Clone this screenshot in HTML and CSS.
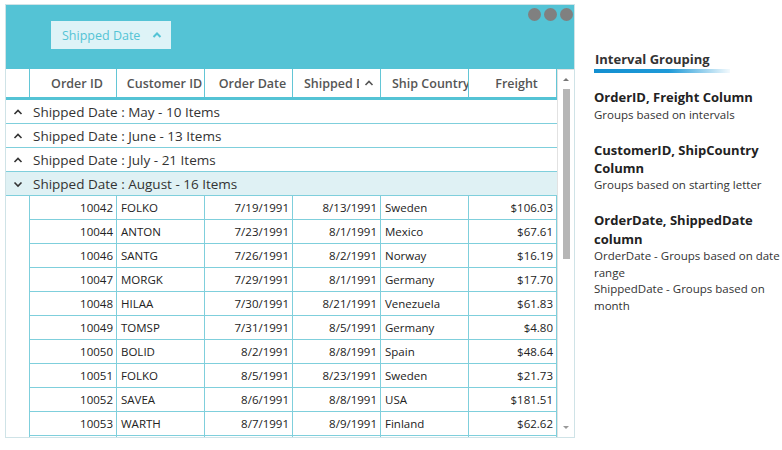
FILE: index.html
```html
<!DOCTYPE html>
<html>
<head>
<meta charset="utf-8">
<link rel="stylesheet" href="styles.css">
</head>
<body>
<div class="page">
  <div class="grid">
    <div class="groupbar">
      <div class="chip"><span>Shipped Date</span>
        <svg class="chip-ico" width="10" height="8" viewBox="0 0 10 8"><polyline points="1.5,6 5,2.5 8.5,6" fill="none" stroke="#54c3d5" stroke-width="2"/></svg>
      </div>
      <div class="dots"><span></span><span></span><span></span></div>
    </div>
    <div class="main">
      <div class="table">
        <div class="row hrow">
          <div class="c"></div>
          <div class="c">Order ID</div>
          <div class="c">Customer ID</div>
          <div class="c">Order Date</div>
          <div class="c sorted"><span class="clip">Shipped Date</span><svg width="10" height="8" viewBox="0 0 10 8"><polyline points="1.5,6 5,2.5 8.5,6" fill="none" stroke="#555" stroke-width="1.6"/></svg></div>
          <div class="c"><span class="clip">Ship Country</span></div>
          <div class="c">Freight</div>
        </div>
        <div class="grow"><svg width="10" height="8" viewBox="0 0 10 8"><polyline points="1.5,6 5,2.5 8.5,6" fill="none" stroke="#333" stroke-width="1.6"/></svg><span>Shipped Date : May - 10 Items</span></div>
        <div class="grow"><svg width="10" height="8" viewBox="0 0 10 8"><polyline points="1.5,6 5,2.5 8.5,6" fill="none" stroke="#333" stroke-width="1.6"/></svg><span>Shipped Date : June - 13 Items</span></div>
        <div class="grow"><svg width="10" height="8" viewBox="0 0 10 8"><polyline points="1.5,6 5,2.5 8.5,6" fill="none" stroke="#333" stroke-width="1.6"/></svg><span>Shipped Date : July - 21 Items</span></div>
        <div class="grow open"><svg width="10" height="8" viewBox="0 0 10 8"><polyline points="1.5,2.5 5,6 8.5,2.5" fill="none" stroke="#333" stroke-width="1.6"/></svg><span>Shipped Date : August - 16 Items</span></div>
        <div class="row drow"><div class="c"></div><div class="c r">10042</div><div class="c">FOLKO</div><div class="c r">7/19/1991</div><div class="c r">8/13/1991</div><div class="c">Sweden</div><div class="c r">$106.03</div></div>
        <div class="row drow"><div class="c"></div><div class="c r">10044</div><div class="c">ANTON</div><div class="c r">7/23/1991</div><div class="c r">8/1/1991</div><div class="c">Mexico</div><div class="c r">$67.61</div></div>
        <div class="row drow"><div class="c"></div><div class="c r">10046</div><div class="c">SANTG</div><div class="c r">7/26/1991</div><div class="c r">8/2/1991</div><div class="c">Norway</div><div class="c r">$16.19</div></div>
        <div class="row drow"><div class="c"></div><div class="c r">10047</div><div class="c">MORGK</div><div class="c r">7/29/1991</div><div class="c r">8/1/1991</div><div class="c">Germany</div><div class="c r">$17.70</div></div>
        <div class="row drow"><div class="c"></div><div class="c r">10048</div><div class="c">HILAA</div><div class="c r">7/30/1991</div><div class="c r">8/21/1991</div><div class="c">Venezuela</div><div class="c r">$61.83</div></div>
        <div class="row drow"><div class="c"></div><div class="c r">10049</div><div class="c">TOMSP</div><div class="c r">7/31/1991</div><div class="c r">8/5/1991</div><div class="c">Germany</div><div class="c r">$4.80</div></div>
        <div class="row drow"><div class="c"></div><div class="c r">10050</div><div class="c">BOLID</div><div class="c r">8/2/1991</div><div class="c r">8/8/1991</div><div class="c">Spain</div><div class="c r">$48.64</div></div>
        <div class="row drow"><div class="c"></div><div class="c r">10051</div><div class="c">FOLKO</div><div class="c r">8/5/1991</div><div class="c r">8/23/1991</div><div class="c">Sweden</div><div class="c r">$21.73</div></div>
        <div class="row drow"><div class="c"></div><div class="c r">10052</div><div class="c">SAVEA</div><div class="c r">8/6/1991</div><div class="c r">8/8/1991</div><div class="c">USA</div><div class="c r">$181.51</div></div>
        <div class="row drow"><div class="c"></div><div class="c r">10053</div><div class="c">WARTH</div><div class="c r">8/7/1991</div><div class="c r">8/9/1991</div><div class="c">Finland</div><div class="c r">$62.62</div></div>
        <div class="row drow"><div class="c"></div><div class="c"></div><div class="c"></div><div class="c"></div><div class="c"></div><div class="c"></div><div class="c"></div></div>
      </div>
      <div class="scroll">
        <div class="arrow up"></div>
        <div class="track"><div class="thumb"></div></div>
        <div class="arrow down"></div>
      </div>
    </div>
  </div>
  <div class="panel">
    <div class="title">Interval Grouping</div>
    <div class="uline"></div>
    <div class="h">OrderID, Freight Column</div>
    <div class="p first">Groups based on intervals</div>
    <div class="h gap">CustomerID, ShipCountry Column</div>
    <div class="p">Groups based on starting letter</div>
    <div class="h gap last">OrderDate, ShippedDate column</div>
    <div class="p">OrderDate - Groups based on date range</div>
    <div class="p">ShippedDate - Groups based on month</div>
  </div>
</div>
</body>
</html>
```
FILE: styles.css
```css
* { box-sizing: border-box; }
body { margin: 0; font-family: "Open Sans", "Noto Sans", sans-serif; color: #333; background: #fff; }
.page { display: flex; padding: 4px 0 0 5px; }
.grid { width: 570px; height: 434px; border: 1px solid #cfe3e7; display: flex; flex-direction: column; flex: none; }
.groupbar { height: 64px; background: #54c3d5; position: relative; flex: none; padding: 16px 0 0 45px; }
.chip { width: 120px; height: 28px; background: #def3f7; color: #54c3d5; font-size: 12.5px; display: flex; align-items: center; padding-left: 11px; }
.chip-ico { margin-left: 12px; }
.dots { position: absolute; top: 3px; right: 1px; display: flex; gap: 3px; }
.dots span { width: 13px; height: 13px; border-radius: 50%; background: #808080; }
.main { display: flex; flex: 1; min-height: 0; }
.table { width: 551px; overflow: hidden; flex: none; }
.row { display: grid; grid-template-columns: 24px 87px 88px 88px 88px 88px 88px; }
.hrow { height: 31px; border-bottom: 3px solid #54c3d5; }
.hrow .c { border-right: 1px solid #63c6d6; font-size: 12.5px; font-weight: 600; color: #555; display: flex; align-items: center; justify-content: center; padding-left: 8px; overflow: hidden; white-space: nowrap; }
.hrow .c:first-child { padding: 0; }
.hrow .c .clip { overflow: hidden; white-space: nowrap; }
.hrow .sorted { justify-content: flex-start; padding-left: 11px; }
.hrow .sorted .clip { width: 55px; }
.hrow .sorted svg { margin-left: 5px; flex: none; }
.hrow .c:nth-child(6) { justify-content: flex-start; padding-left: 11px; }
.grow { height: 24px; border-bottom: 1px solid #7fcfdc; display: flex; align-items: center; font-size: 13.5px; }
.grow svg { margin: 0 10px 0 7px; }
.grow.open { background: #dff1f4; }
.drow { height: 24px; font-size: 11.5px; color: #222; }
.drow .c { border-right: 1px solid #7fcfdc; border-bottom: 1px solid #7fcfdc; display: flex; align-items: center; padding: 0 4px; white-space: nowrap; overflow: hidden; }
.drow .c:first-child { border-bottom: none; }
.drow .c.r { justify-content: flex-end; padding-right: 3px; }
.scroll { width: 17px; border-left: 1px solid #e2e2e2; border-top: 1px solid #e2e2e2; display: flex; flex-direction: column; align-items: center; }
.arrow { width: 0; height: 0; border-left: 3px solid transparent; border-right: 3px solid transparent; margin: 8px 0; }
.arrow.up { border-bottom: 3px solid #777; }
.arrow.down { border-top: 3px solid #999; margin-bottom: 8px; }
.track { flex: 1; width: 100%; display: flex; justify-content: center; }
.thumb { width: 7px; height: 170px; background: #b6b6b6; }
.panel { width: 187px; margin-left: 19px; display: flex; flex-direction: column; padding-top: 46px; }
.title { font-size: 13px; font-weight: 700; line-height: 18px; color: #333; padding-left: 1px; }
.uline { width: 136px; height: 4px; margin-top: 1px; background: linear-gradient(to right, #138fd0 0%, #1e9ad8 55%, rgba(30,154,216,0.05) 100%); }
.h { font-size: 13px; font-weight: 700; line-height: 18px; margin-top: 15px; color: #222; }
.h.gap { margin-top: 17px; }
.h.last { margin-top: 18px; line-height: 18.5px; }
.p { font-size: 11.5px; line-height: 16.5px; color: #333; }
.p.first { margin-top: 1px; }
```
